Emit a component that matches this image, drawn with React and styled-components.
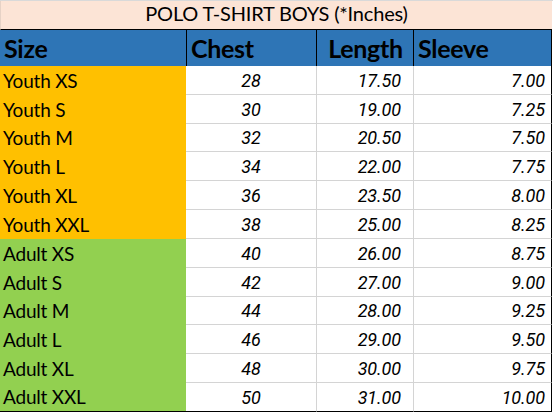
import React from 'react';
import styled, { createGlobalStyle } from 'styled-components';

const GlobalStyle = createGlobalStyle`
  html, body {
    margin: 0;
    padding: 0;
    background: #ffffff;
  }
  body {
    font-family: Lato, "Open Sans", "Liberation Sans", sans-serif;
    color: #000000;
  }
`;

const COLS = '186px 130px 97px 139px';

const Sheet = styled.div`
  width: 553px;
  height: 415px;
  box-sizing: border-box;
  border-top: 1px solid #d9d9d9;
  display: flex;
  flex-direction: column;
`;

const TitleRow = styled.div`
  height: 29px;
  box-sizing: border-box;
  margin-right: 1px;
  background: #fce4d6;
  border-bottom: 1px solid #000000;
  border-left: 1px solid #e6d2c6;
  display: flex;
  align-items: flex-end;
  justify-content: center;
  padding-bottom: 4px;
  font-size: 20px;
  letter-spacing: -0.2px;
`;

const Row = styled.div`
  display: grid;
  grid-template-columns: ${COLS};
  width: 552px;
  height: ${(p) => p.$height};
  box-sizing: border-box;
`;

const HeaderCell = styled.div`
  background: #2e75b6;
  box-sizing: border-box;
  border-left: ${(p) => (p.$first ? 'none' : '1px solid #000000')};
  border-right: ${(p) => (p.$last ? '1px solid #000000' : 'none')};
  display: flex;
  align-items: flex-end;
  justify-content: ${(p) => p.$justify || 'flex-start'};
  padding: 0 3px 3px 4px;
  font-weight: 700;
  font-size: 25px;
  letter-spacing: -0.3px;
`;

const SizeCell = styled.div`
  background: ${(p) => (p.$tone === 'youth' ? '#ffc000' : '#92d050')};
  box-sizing: border-box;
  border-bottom: ${(p) => (p.$end ? '1px solid #000000' : 'none')};
  display: flex;
  align-items: flex-end;
  padding: 0 0 3px 3px;
  font-size: 19px;
  letter-spacing: -0.2px;
`;

const NumCell = styled.div`
  background: #ffffff;
  box-sizing: border-box;
  border-left: ${(p) => (p.$grid ? '1px solid #d4d4d4' : 'none')};
  border-right: ${(p) => (p.$last ? '1px solid #000000' : 'none')};
  border-bottom: 1px solid ${(p) => (p.$end ? '#000000' : '#d4d4d4')};
  display: flex;
  align-items: flex-end;
  justify-content: ${(p) => p.$justify};
  padding: 0 ${(p) => p.$pad} 3px 0;
  font-family: Roboto, "Open Sans", sans-serif;
  font-style: italic;
  font-size: 18px;
  letter-spacing: -0.1px;
`;

const sizes = [
  ['Youth XS', 28, '17.50', '7.00'],
  ['Youth S', 30, '19.00', '7.25'],
  ['Youth M', 32, '20.50', '7.50'],
  ['Youth L', 34, '22.00', '7.75'],
  ['Youth XL', 36, '23.50', '8.00'],
  ['Youth XXL', 38, '25.00', '8.25'],
  ['Adult XS', 40, '26.00', '8.75'],
  ['Adult S', 42, '27.00', '9.00'],
  ['Adult M', 44, '28.00', '9.25'],
  ['Adult L', 46, '29.00', '9.50'],
  ['Adult XL', 48, '30.00', '9.75'],
  ['Adult XXL', 50, '31.00', '10.00'],
];

export default function App() {
  return (
    <>
      <GlobalStyle />
      <Sheet>
        <TitleRow>POLO T-SHIRT BOYS (*Inches)</TitleRow>
        <Row $height="36px">
          <HeaderCell $first>Size</HeaderCell>
          <HeaderCell>Chest</HeaderCell>
          <HeaderCell $justify="center">Length</HeaderCell>
          <HeaderCell $last>Sleeve</HeaderCell>
        </Row>
        {sizes.map(([name, chest, length, sleeve], i) => {
          const end = i === sizes.length - 1;
          return (
            <Row key={name} $height="28.83px">
              <SizeCell $tone={name.startsWith('Youth') ? 'youth' : 'adult'} $end={end}>
                {name}
              </SizeCell>
              <NumCell $justify="center" $pad="0px" $end={end}>
                {chest}
              </NumCell>
              <NumCell $justify="flex-end" $pad="12px" $grid $end={end}>
                {length}
              </NumCell>
              <NumCell $justify="flex-end" $pad="6px" $grid $last $end={end}>
                {sleeve}
              </NumCell>
            </Row>
          );
        })}
      </Sheet>
    </>
  );
}
